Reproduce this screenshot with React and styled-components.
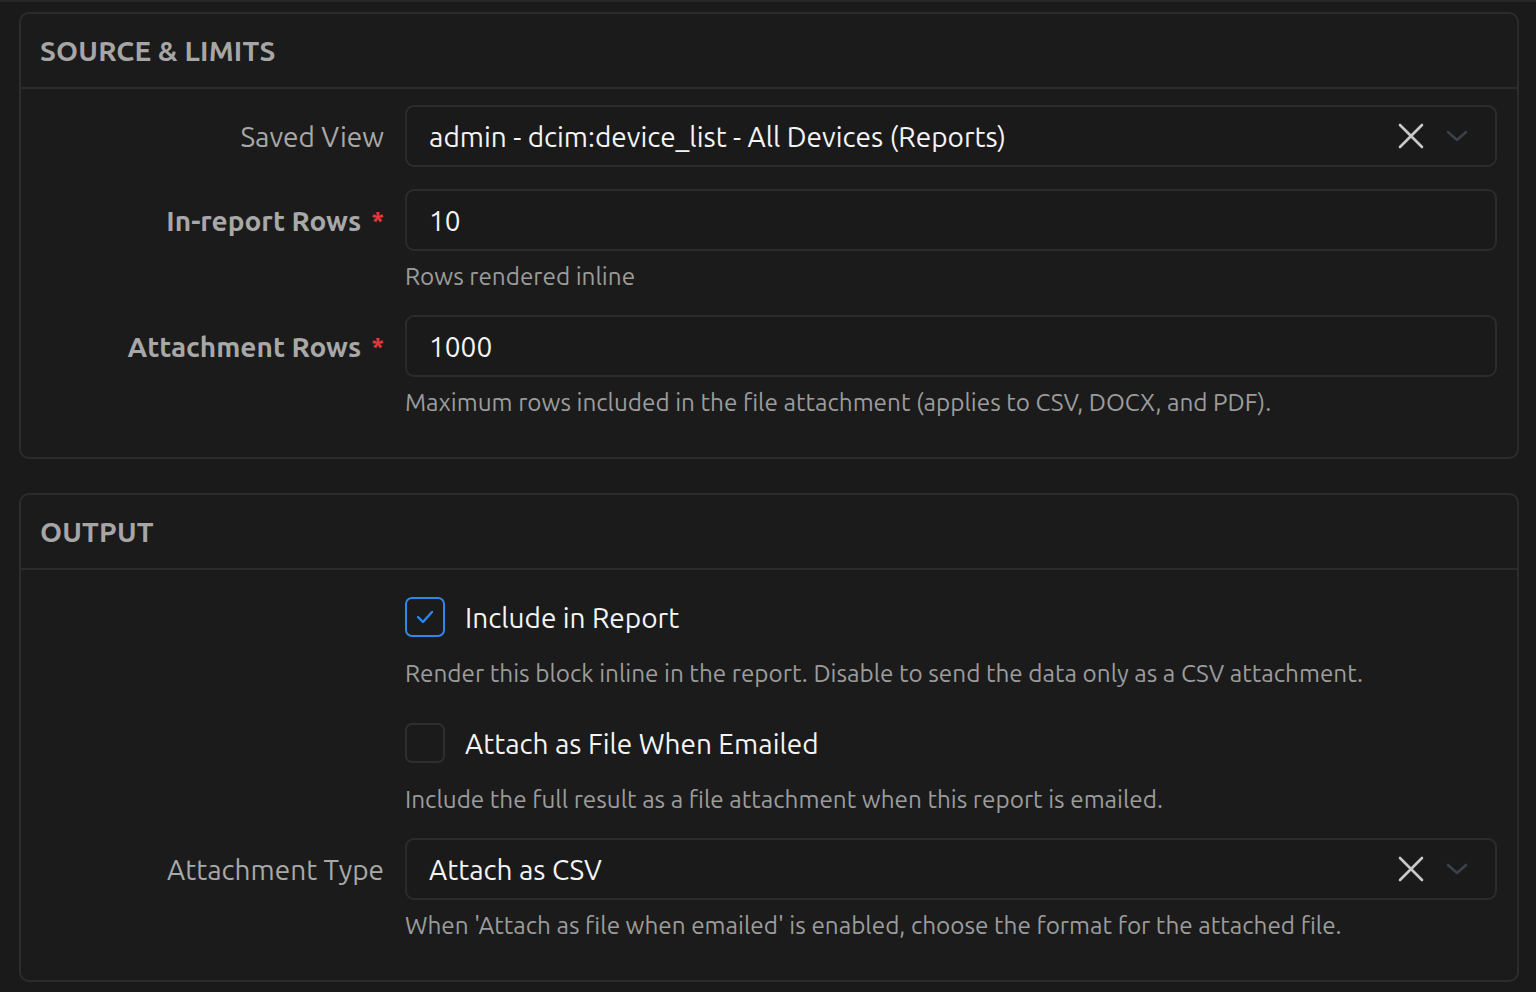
import styled, { createGlobalStyle } from "styled-components";

const GlobalStyle = createGlobalStyle`
  html, body {
    margin: 0;
    padding: 0;
    background: #1a1a1a;
  }
  body {
    font-family: "Ubuntu", "Noto Sans", "Open Sans", sans-serif;
    color: #e8e8e8;
    border-top: 2px solid #262626;
  }
`;

const Page = styled.div`
  padding: 10px 17px 10px 19px;
  display: flex;
  flex-direction: column;
  gap: 34px;
`;

const Card = styled.section`
  background: #1b1b1b;
  border: 2px solid #2c2c2c;
  border-radius: 10px;
`;

const CardHeader = styled.header`
  height: 73px;
  display: flex;
  align-items: center;
  padding: 0 19px;
  border-bottom: 2px solid #2c2c2c;
  font-size: 28px;
  font-weight: 700;
  color: #a6a6a6;
  letter-spacing: 0.2px;
`;

const CardBody = styled.div`
  padding: 16px 20px 16px 0;
`;

const Group = styled.div`
  display: grid;
  grid-template-columns: 363px 1fr;
  column-gap: 21px;
  margin-bottom: 22px;
`;

const Label = styled.div`
  height: 62px;
  display: flex;
  align-items: center;
  justify-content: flex-end;
  font-size: 28px;
  font-weight: ${(p) => (p.$required ? 600 : 400)};
  color: #a8a8a8;
  white-space: nowrap;
`;

const Star = styled.span`
  color: #e5383b;
  margin-left: 10px;
  font-weight: 700;
  font-size: 26px;
`;

const Field = styled.div`
  display: flex;
  flex-direction: column;
  min-width: 0;
`;

const Box = styled.div`
  height: 62px;
  box-sizing: border-box;
  border: 2px solid #2c2c2c;
  border-radius: 9px;
  background: #1a1a1a;
  display: flex;
  align-items: center;
  padding: 0 27px 0 22px;
  font-size: 28px;
  color: #f4f4f4;
`;

const Value = styled.span`
  flex: 1;
  white-space: nowrap;
  overflow: hidden;
`;

const Icons = styled.div`
  display: flex;
  align-items: center;
  gap: 22px;
`;

const Help = styled.div`
  margin-top: 8px;
  line-height: 34px;
  font-size: 24.3px;
  color: #9c9c9c;
  white-space: nowrap;
`;

const CheckRow = styled.label`
  height: 62px;
  display: flex;
  align-items: center;
  gap: 20px;
  font-size: 28px;
  color: #f4f4f4;
`;

const CheckBox = styled.span`
  width: 40px;
  height: 40px;
  box-sizing: border-box;
  border-radius: 7px;
  border: 2px solid ${(p) => (p.$checked ? "#2f86ec" : "#2e2e2e")};
  display: flex;
  align-items: center;
  justify-content: center;
`;

const ClearIcon = () => (
  <svg width="26" height="26" viewBox="0 0 26 26" fill="none">
    <path d="M2 2L24 24M24 2L2 24" stroke="#c9c9c9" strokeWidth="2.6" strokeLinecap="round" />
  </svg>
);

const ChevronIcon = () => (
  <svg width="22" height="12" viewBox="0 0 22 12" fill="none">
    <path d="M2 2L11 10L20 2" stroke="#3a4148" strokeWidth="2.6" strokeLinecap="round" strokeLinejoin="round" />
  </svg>
);

const CheckIcon = () => (
  <svg width="20" height="14" viewBox="0 0 20 14" fill="none">
    <path d="M3 7L8 12L17 2" stroke="#2f86ec" strokeWidth="2.4" strokeLinecap="round" strokeLinejoin="round" />
  </svg>
);

const Select = ({ value }) => (
  <Box>
    <Value>{value}</Value>
    <Icons>
      <ClearIcon />
      <ChevronIcon />
    </Icons>
  </Box>
);

const FormRow = ({ label, required, help, children }) => (
  <Group>
    <Label $required={required}>
      {label}
      {required && <Star>*</Star>}
    </Label>
    <Field>
      {children}
      {help && <Help>{help}</Help>}
    </Field>
  </Group>
);

const Checkbox = ({ checked, label }) => (
  <CheckRow>
    <CheckBox $checked={checked}>{checked && <CheckIcon />}</CheckBox>
    {label}
  </CheckRow>
);

export default function App() {
  return (
    <>
      <GlobalStyle />
      <Page>
        <Card>
          <CardHeader>SOURCE &amp; LIMITS</CardHeader>
          <CardBody>
            <FormRow label="Saved View">
              <Select value="admin - dcim:device_list - All Devices (Reports)" />
            </FormRow>
            <FormRow label="In-report Rows" required help="Rows rendered inline">
              <Box>
                <Value>10</Value>
              </Box>
            </FormRow>
            <FormRow
              label="Attachment Rows"
              required
              help="Maximum rows included in the file attachment (applies to CSV, DOCX, and PDF)."
            >
              <Box>
                <Value>1000</Value>
              </Box>
            </FormRow>
          </CardBody>
        </Card>
        <Card>
          <CardHeader>OUTPUT</CardHeader>
          <CardBody>
            <FormRow
              label=""
              help="Render this block inline in the report. Disable to send the data only as a CSV attachment."
            >
              <Checkbox checked label="Include in Report" />
            </FormRow>
            <FormRow
              label=""
              help="Include the full result as a file attachment when this report is emailed."
            >
              <Checkbox label="Attach as File When Emailed" />
            </FormRow>
            <FormRow
              label="Attachment Type"
              help="When 'Attach as file when emailed' is enabled, choose the format for the attached file."
            >
              <Select value="Attach as CSV" />
            </FormRow>
          </CardBody>
        </Card>
      </Page>
    </>
  );
}
